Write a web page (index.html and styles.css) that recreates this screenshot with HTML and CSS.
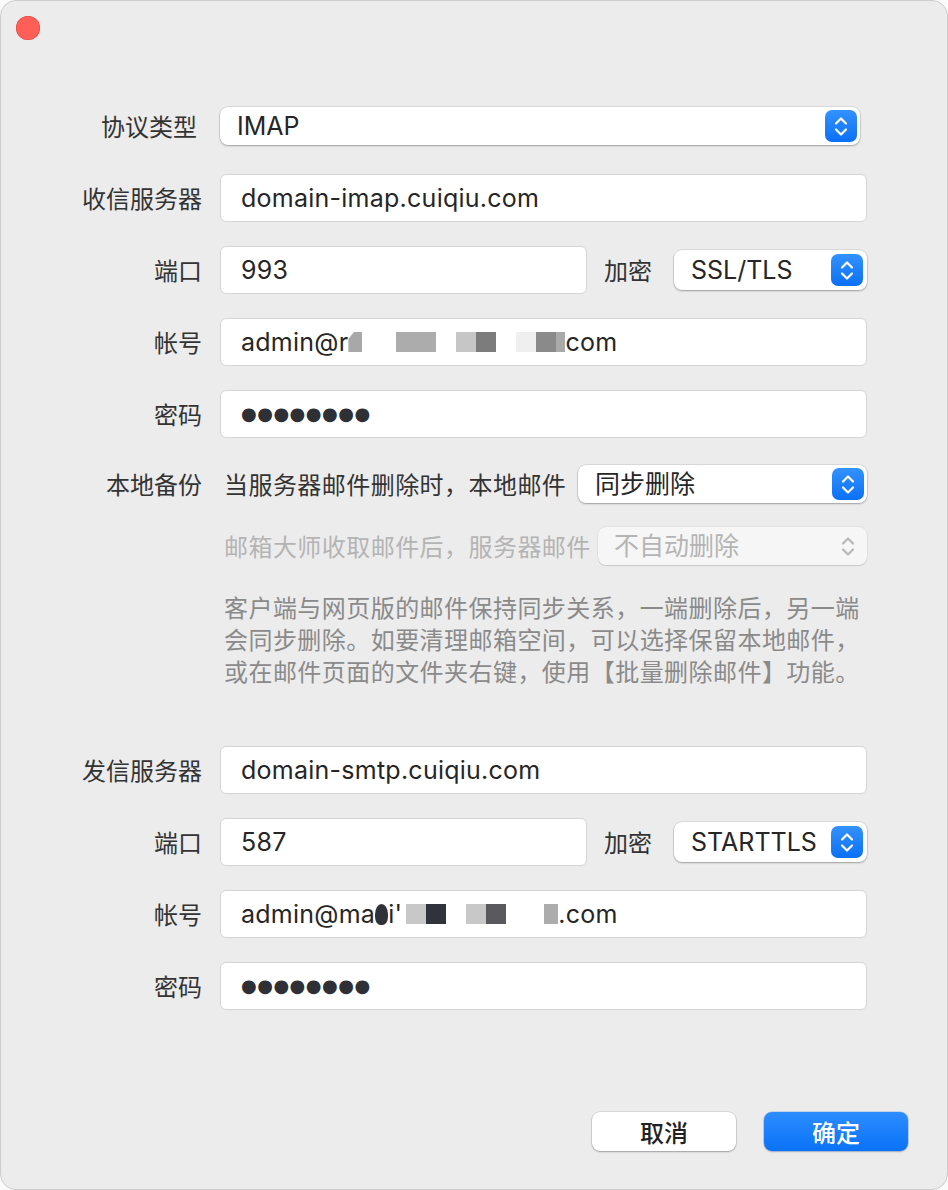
FILE: index.html
```html
<!DOCTYPE html>
<html>
<head>
<meta charset="utf-8">
<title>账户设置</title>
<link rel="stylesheet" href="styles.css">
</head>
<body>

<div class="window">
	<div class="titlebar"><span class="close"></span></div>

	<div class="form">
		<div class="row row-proto">
			<label class="lbl lbl-proto">协议类型</label>
			<div class="select sel-proto">
				<span class="sel-text">IMAP</span>
				<span class="stepper"><svg viewBox="0 0 32 32" width="32" height="32"><path d="M11 13.5 16 8.5 21 13.5M11 19.5 16 24.5 21 19.5"/></svg></span>
			</div>
		</div>

		<div class="row">
			<label class="lbl">收信服务器</label>
			<div class="field">domain-imap.cuiqiu.com</div>
		</div>

		<div class="row">
			<label class="lbl">端口</label>
			<div class="field field-port">993</div>
			<label class="lbl-enc">加密</label>
			<div class="select sel-enc">
				<span class="sel-text">SSL/TLS</span>
				<span class="stepper"><svg viewBox="0 0 32 32" width="32" height="32"><path d="M11 13.5 16 8.5 21 13.5M11 19.5 16 24.5 21 19.5"/></svg></span>
			</div>
		</div>

		<div class="row">
			<label class="lbl">帐号</label>
			<div class="field">admin@r<span class="mask m-a"></span><span class="mask m-gap34"></span><span class="mask m-40 c-aa"></span><span class="mask m-gap20"></span><span class="mask m-20 c-c6"></span><span class="mask m-20 c-7c"></span><span class="mask m-gap20"></span><span class="mask m-20 c-ef"></span><span class="mask m-20 c-8a"></span><span class="mask m-9 c-a9"></span>com</div>
		</div>

		<div class="row">
			<label class="lbl">密码</label>
			<div class="field"><span class="dots">●●●●●●●●</span></div>
		</div>

		<div class="row row-local">
			<label class="lbl">本地备份</label>
			<div class="ctrl">
				<span class="ctrl-text">当服务器邮件删除时，本地邮件</span>
				<div class="select sel-local">
					<span class="sel-text">同步删除</span>
					<span class="stepper"><svg viewBox="0 0 32 32" width="32" height="32"><path d="M11 13.5 16 8.5 21 13.5M11 19.5 16 24.5 21 19.5"/></svg></span>
				</div>
			</div>
		</div>

		<div class="row row-server">
			<label class="lbl"></label>
			<div class="ctrl">
				<span class="ctrl-text off">邮箱大师收取邮件后，服务器邮件</span>
				<div class="select sel-off">
					<span class="sel-text">不自动删除</span>
					<span class="stepper stepper-off"><svg viewBox="0 0 32 32" width="32" height="32"><path d="M11 13.5 16 8.5 21 13.5M11 19.5 16 24.5 21 19.5"/></svg></span>
				</div>
			</div>
		</div>

		<div class="note">客户端与网页版的邮件保持同步关系，一端删除后，另一端<br>会同步删除。如要清理邮箱空间，可以选择保留本地邮件，<br>或在邮件页面的文件夹右键，使用【批量删除邮件】功能。</div>

		<div class="row row-smtp">
			<label class="lbl">发信服务器</label>
			<div class="field">domain-smtp.cuiqiu.com</div>
		</div>

		<div class="row">
			<label class="lbl">端口</label>
			<div class="field field-port">587</div>
			<label class="lbl-enc">加密</label>
			<div class="select sel-enc">
				<span class="sel-text">STARTTLS</span>
				<span class="stepper"><svg viewBox="0 0 32 32" width="32" height="32"><path d="M11 13.5 16 8.5 21 13.5M11 19.5 16 24.5 21 19.5"/></svg></span>
			</div>
		</div>

		<div class="row">
			<label class="lbl">帐号</label>
			<div class="field">admin@ma<span class="mask m-b"></span>i'<span class="mask m-gap4 low"></span><span class="mask m-20 c-c8 low"></span><span class="mask m-20 c-33 low"></span><span class="mask m-gap20 low"></span><span class="mask m-20 c-c8 low"></span><span class="mask m-20 c-5a low"></span><span class="mask m-gap38 low"></span><span class="mask m-14 c-aa low"></span>.com</div>
		</div>

		<div class="row">
			<label class="lbl">密码</label>
			<div class="field"><span class="dots">●●●●●●●●</span></div>
		</div>
	</div>

	<div class="actions">
		<button class="btn">取消</button>
		<button class="btn btn-primary">确定</button>
	</div>
</div>

</body>
</html>
```

FILE: styles.css
```css
body { margin: 0; padding: 0; background-color: #fafafa; font: normal 24px/1.2 'Inter', 'Noto Sans CJK SC', sans-serif; color: #262626; }

.window { height: 1190px; box-sizing: border-box; display: flex; flex-direction: column; background-color: #ececec; border: 1px solid #cdcdcd; border-radius: 16px; overflow: hidden; }
.titlebar { height: 56px; padding: 15px 0 0 15px; box-sizing: border-box; }
.close { display: block; width: 24px; height: 24px; border-radius: 50%; background-color: #ff5f57; box-shadow: inset 0 0 0 0.5px #e0443e; }

.form { display: flex; flex-direction: column; }
.row { display: flex; align-items: center; height: 48px; margin-top: 24px; padding-left: 59px; }
.row-proto  { margin-top: 45px; }
.row-local  { margin-top: 22px; }
.row-server { margin-top: 14px; }
.row-smtp   { margin-top: 59px; }

.lbl { width: 142px; margin-right: 18px; text-align: right; font-family: 'Noto Sans CJK SC', sans-serif; color: #333; }
.lbl-proto { width: 137px; margin-right: 23px; }
.lbl-enc { margin: 0 22px 0 17px; font-family: 'Noto Sans CJK SC', sans-serif; color: #333; }

.field { width: 647px; height: 48px; box-sizing: border-box; display: flex; align-items: center; padding-left: 20px; background-color: #fff; border: 1px solid #d5d5d5; border-radius: 6px; white-space: nowrap; font-size: 25px; letter-spacing: 0.25px; }
.field-port { width: 367px; }

.select { height: 38px; box-sizing: border-box; display: flex; align-items: center; justify-content: space-between; padding: 0 3px 0 17px; background-color: #fff; border-radius: 8px; box-shadow: 0 0 0 0.5px rgba(0,0,0,0.14), 0 1px 2px rgba(0,0,0,0.28); white-space: nowrap; }
.sel-proto { width: 640px; }
.sel-enc   { width: 193px; height: 40px; padding-right: 4px; }
.sel-local { width: 289px; }
.sel-off   { width: 269px; padding-left: 16px; background-color: #f6f6f6; color: #b4b4b4; box-shadow: 0 0 0 0.5px rgba(0,0,0,0.08), 0 1px 1px rgba(0,0,0,0.12); }
.sel-text { font-family: 'Inter', 'Noto Sans CJK SC', sans-serif; font-size: 25px; }

.stepper { display: block; width: 32px; height: 32px; border-radius: 7px; background: linear-gradient(#3492ff, #0a70f5); }
.stepper svg { display: block; }
.stepper path { fill: none; stroke: #fff; stroke-width: 2.2; stroke-linecap: round; stroke-linejoin: round; }
.stepper-off { background: none; }
.stepper-off path { stroke: #b8b8b8; }

.ctrl { width: 647px; display: flex; align-items: center; }
.ctrl-text { margin-left: 4px; font-family: 'Noto Sans CJK SC', sans-serif; letter-spacing: 0.45px; color: #333; white-space: nowrap; }
.ctrl-text.off { color: #b4b4b4; }
.ctrl .select { margin-left: auto; }

.note { margin: 21px 0 0 223px; font: 24px/32px 'Noto Sans CJK SC', sans-serif; letter-spacing: 0.45px; color: #8a8a8a; white-space: nowrap; }

.dots { font-family: 'DejaVu Sans', sans-serif; font-size: 18px; letter-spacing: 0.5px; color: #2e3036; }

.mask { display: inline-block; height: 20px; vertical-align: -2px; }
.mask.low { vertical-align: -7px; }
.m-a { width: 14px; background-color: #a8a8a8; clip-path: polygon(40% 0, 100% 0, 100% 100%, 0 100%, 0 35%); }
.m-b { width: 13px; height: 21px; background-color: #30323a; border-radius: 50% 50% 40% 40%; vertical-align: -8px; }
.m-gap4  { width: 4px; }
.m-gap20 { width: 20px; }
.m-gap34 { width: 34px; }
.m-gap38 { width: 38px; }
.m-40 { width: 40px; }
.m-20 { width: 20px; }
.m-14 { width: 14px; }
.m-9  { width: 9px; }
.c-aa { background-color: #acacac; }
.c-c6 { background-color: #c6c6c6; }
.c-c8 { background-color: #c8c8c8; }
.c-7c { background-color: #7c7c7c; }
.c-ef { background-color: #efefef; }
.c-8a { background-color: #8a8a8a; }
.c-a9 { background-color: #a9a9a9; }
.c-33 { background-color: #31333a; }
.c-5a { background-color: #5a5a5e; }

.actions { margin-top: auto; display: flex; justify-content: flex-end; gap: 28px; padding: 0 39px 38px 0; }
.btn { width: 144px; height: 39px; padding: 0; border: none; border-radius: 8px; background-color: #fff; box-shadow: 0 0 0 0.5px rgba(0,0,0,0.14), 0 1px 2px rgba(0,0,0,0.28); font: 500 24px/1 'Noto Sans CJK SC', sans-serif; color: #222; }
.btn-primary { background: linear-gradient(#2d8dff, #0a72f6); color: #fff; box-shadow: 0 0 0 0.5px rgba(0,80,200,0.3), 0 1px 2px rgba(0,0,0,0.2); }
```
